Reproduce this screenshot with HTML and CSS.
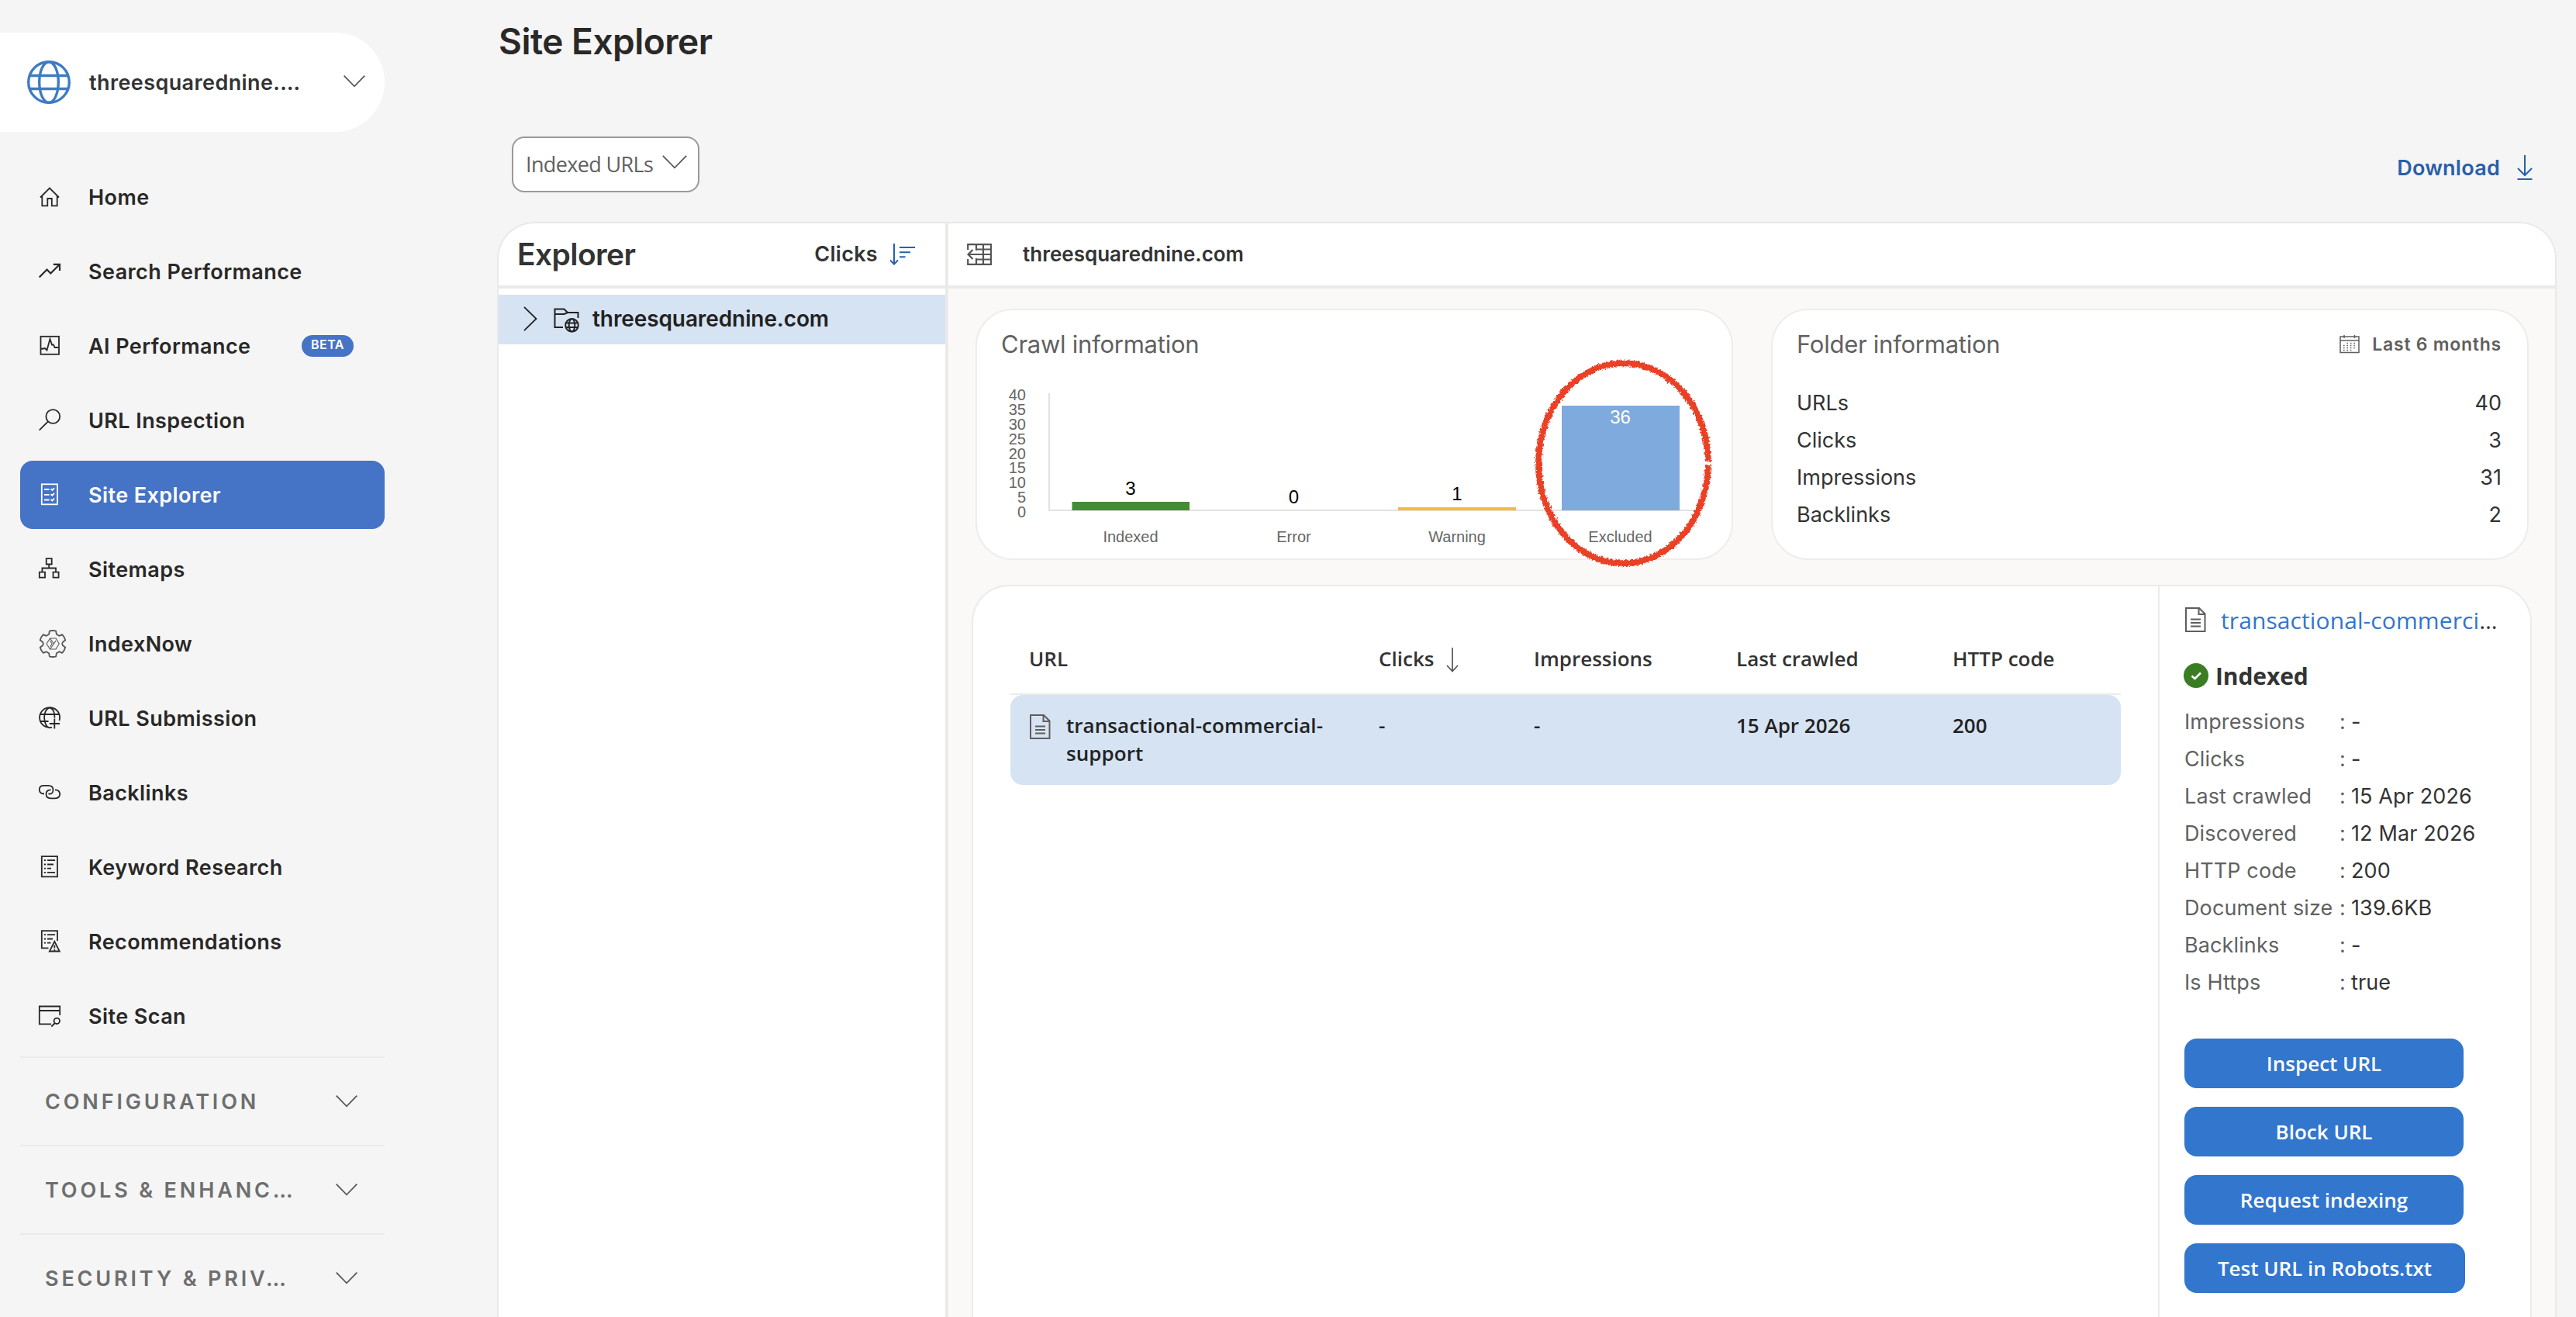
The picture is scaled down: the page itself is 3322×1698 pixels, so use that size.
FILE: index.html
```html
<!DOCTYPE html>
<html lang="en">
<head>
    <meta charset="UTF-8">
    <meta name="viewport" content="width=device-width, initial-scale=1.0">
    <title>Site Explorer</title>
    <link rel="stylesheet" href="styles.css">
</head>
<body>
    <aside class="sidebar">
        <div class="site-select">
            <svg class="site-globe" width="56" height="56" viewBox="0 0 56 56">
                <circle cx="28" cy="28" r="26.3"/>
                <ellipse cx="28" cy="28" rx="12.3" ry="26.3"/>
                <path d="M3.5 19.500H52.500M3.500 36.500H52.500"/>
            </svg>
            <span class="site-name">threesquarednine.…</span>
            <svg class="chevron" width="28" height="16" viewBox="0 0 28 16"><path d="M.7 .7 14 14.300 27.300 .7"/></svg>
        </div>

        <nav class="nav">
            <a class="nav-item">
                <svg class="nav-icon" viewBox="0 0 28 28"><path d="M2 14.500 14 2.500 26 14.500M4.300 12.500V25.300H11.300V16H16.800V25.300H23.700V12.500"/></svg>
                <span>Home</span>
            </a>
            <a class="nav-item">
                <svg class="nav-icon bold" viewBox="0 0 28 28"><path d="M.7 21.500 10.500 11.500 15.300 16.500 27 4.800M18.800 4.800H27V13"/></svg>
                <span>Search Performance</span>
            </a>
            <a class="nav-item">
                <svg class="nav-icon" viewBox="0 0 28 28"><rect x="2.500" y="1.800" width="23.500" height="23"/><path d="M3 18 5.500 17.500 8 17 10.500 19.500 14.500 5 17 12.500 19 12.500 20.500 16H25.500"/></svg>
                <span>AI Performance</span>
                <span class="beta">BETA</span>
            </a>
            <a class="nav-item">
                <svg class="nav-icon" viewBox="0 0 28 28"><circle cx="18.300" cy="9" r="8.900"/><path d="M12 15.300.7 26.700"/></svg>
                <span>URL Inspection</span>
            </a>
            <a class="nav-item active">
                <svg class="nav-icon" viewBox="0 0 28 28"><rect x="3.800" y=".3" width="20.200" height="26"/><path d="M7 7H13.500M7 13.800H13.500M7 20.500H13.500M15.500 6.500 17.500 8 20 5M15.500 13.300 17.500 14.800 20 11.800M15.500 20 17.500 21.500 20 18.500"/></svg>
                <span>Site Explorer</span>
            </a>
            <a class="nav-item">
                <svg class="nav-icon" viewBox="0 0 28 28"><path d="M9.700 .2H16.700V7.500H9.700ZM.8 17.700H8V24.700H.8ZM18.500 17.700H25.600V24.700H18.500ZM13.200 7.500V12.500M4.400 17.700V12.500H22V17.700"/></svg>
                <span>Sitemaps</span>
            </a>
            <a class="nav-item">
                <svg class="nav-icon gear" viewBox="-18 -18 36 36">
                    <path d="M-4.900-12.200-4.100-16.500Q0-17.500 4.100-16.500L4.900-12.200 8.300-10.200 12.200-11.800Q15-9 16.300-4.700L12.800-2Q11.500 0 12.800 2L16.300 4.700Q15 9 12.200 11.800L8.300 10.200 4.900 12.200 4.100 16.500Q0 17.500-4.100 16.500L-4.900 12.200-8.300 10.200-12.200 11.800Q-15 9-16.300 4.700L-12.800 2Q-11.500 0-12.800-2L-16.300-4.700Q-15-9-12.200-11.800L-8.300-10.200Z"/>
                    <path class="thin" d="M-8 0-3.500-7H4L8.300 0 4 7H-3.500ZM-3.500-7 1.500 0-3.500 7M-3.500-4-.8 0-3.500 4M1.500 0 4-4"/>
                </svg>
                <span>IndexNow</span>
            </a>
            <a class="nav-item">
                <svg class="nav-icon" viewBox="0 0 28 28"><path d="M17 25.800A13 13 0 1 1 26.500 17M9 22C6.500 17 6.500 9 9 4.500Q11.500.5 14 .5T19 4.500Q20.500 8 20.500 13.500M9 22Q11.500 26.300 14 26.300M1.800 9H26.200M1.800 18H12.500M20.300 14.500V27.500M13.800 21H27"/></svg>
                <span>URL Submission</span>
            </a>
            <a class="nav-item">
                <svg class="nav-icon" viewBox="0 0 28 28"><path d="M7 15.500Q.8 15.500.8 10T7 4.800H12.500Q18.500 4.800 18.500 10.500T12.500 15.500M21 10.300Q27.200 10.500 27.200 15.800T21 21.300H15.500Q9.500 21.300 9.500 15.800T15.500 10.300"/></svg>
                <span>Backlinks</span>
            </a>
            <a class="nav-item">
                <svg class="nav-icon" viewBox="0 0 28 28"><path d="M3.800 .2H24V26.300H3.800ZM6.800 5.200H9M11 5.200H21M6.800 10.500H9M11 10.500H19M6.800 15.700H9M11 15.700H16M6.800 20.800H9M11 20.800H21"/></svg>
                <span>Keyword Research</span>
            </a>
            <a class="nav-item">
                <svg class="nav-icon" viewBox="0 0 28 28"><path d="M12.500 22.300H3.800V.2H24V13M6.800 5.200H9M11 5.200H21M6.800 10.500H9M11 10.500H18M6.800 15.700H9M11 15.700H15.500M20.300 13.800 13.800 26.500H26.800ZM20.300 18.500V22.500M20.300 24V25.500"/></svg>
                <span>Recommendations</span>
            </a>
            <a class="nav-item">
                <svg class="nav-icon" viewBox="0 0 28 28"><path d="M16 24.300H.8V1.500H27.200V13M.8 7H27.200M20.800 23 16.300 27.500"/><circle cx="23.300" cy="20.300" r="3.700"/></svg>
                <span>Site Scan</span>
            </a>
        </nav>

        <div class="nav-groups">
            <div class="nav-group">
                <span>CONFIGURATION</span>
                <svg class="chevron" width="28" height="16" viewBox="0 0 28 16"><path d="M.7 .7 14 14.300 27.300 .7"/></svg>
            </div>
            <div class="nav-group">
                <span>TOOLS &amp; ENHANC…</span>
                <svg class="chevron" width="28" height="16" viewBox="0 0 28 16"><path d="M.7 .7 14 14.300 27.300 .7"/></svg>
            </div>
            <div class="nav-group">
                <span>SECURITY &amp; PRIV…</span>
                <svg class="chevron" width="28" height="16" viewBox="0 0 28 16"><path d="M.7 .7 14 14.300 27.300 .7"/></svg>
            </div>
        </div>
    </aside>

    <main class="main">
        <h1>Site Explorer</h1>

        <div class="toolbar">
            <button class="filter">
                <span>Indexed URLs</span>
                <svg class="chevron" width="32" height="18" viewBox="0 0 32 18"><path d="M.8 .8 16 16.300 31.200 .8"/></svg>
            </button>
            <a class="download">
                <span>Download</span>
                <svg width="20" height="34" viewBox="0 0 20 34"><path d="M10 0V26M1 17 10 26 19 17M.5 31H19.500"/></svg>
            </a>
        </div>

        <div class="panel">
            <section class="explorer">
                <div class="pane-head explorer-head">
                    <h2>Explorer</h2>
                    <span class="sort-label">Clicks</span>
                    <svg class="sort-icon" width="34" height="28" viewBox="0 0 34 28"><path d="M6 0V26M1 21.500 6 26.500 11 21.500M13 5H33M13 11.200H27M13 17.200H20.500"/></svg>
                </div>
                <div class="tree">
                    <div class="tree-row">
                        <svg class="tree-chevron" width="18" height="32" viewBox="0 0 18 32"><path d="M1 .8 16.500 16 1 31.200"/></svg>
                        <svg class="tree-folder" width="34" height="32" viewBox="0 0 34 32">
                            <path d="M12 25H1.500V1.500H13.500L18 6H31.500V13M1.500 8H13.500L18 6"/>
                            <circle cx="23.500" cy="22.300" r="8.300"/>
                            <ellipse cx="23.500" cy="22.300" rx="3.800" ry="8.300"/>
                            <path d="M15.500 19.500H31.500M15.500 25H31.500"/>
                        </svg>
                        <span>threesquarednine.com</span>
                    </div>
                </div>
            </section>

            <section class="content">
                <div class="pane-head content-head">
                    <svg width="32" height="28" viewBox="0 0 32 28"><path d="M1.200 8V1.200H31V26.800H1.200V20M12 1V9M12 19V27M21 1V27M12 7.500H31M12 20.500H31M1 14H31M7.500 8 1.500 14 7.500 20"/></svg>
                    <span>threesquarednine.com</span>
                </div>

                <div class="content-body">
                    <div class="cards">
                        <div class="card crawl-card">
                            <h3>Crawl information</h3>
                            <svg class="chart" width="973" height="256" viewBox="0 0 973 256">
                                <path class="axis" d="M93 43V194.500M92 194H928"/>
                                <g class="ticks">
                                    <text x="63" y="52">40</text>
                                    <text x="63" y="71">35</text>
                                    <text x="63" y="90">30</text>
                                    <text x="63" y="109">25</text>
                                    <text x="63" y="128">20</text>
                                    <text x="63" y="146">15</text>
                                    <text x="63" y="165">10</text>
                                    <text x="63" y="184">5</text>
                                    <text x="63" y="203">0</text>
                                </g>
                                <rect class="bar-indexed" x="122.500" y="183" width="151.500" height="11"/>
                                <rect class="bar-warning" x="543" y="190" width="152" height="4"/>
                                <rect class="bar-excluded" x="754" y="59" width="152" height="135"/>
                                <g class="values">
                                    <text x="198" y="174">3</text>
                                    <text x="408.500" y="185">0</text>
                                    <text x="619" y="181">1</text>
                                    <text class="inside" x="829.500" y="82">36</text>
                                </g>
                                <g class="labels">
                                    <text x="198" y="235">Indexed</text>
                                    <text x="408.500" y="235">Error</text>
                                    <text x="619" y="235">Warning</text>
                                    <text x="829.500" y="235">Excluded</text>
                                </g>
                            </svg>
                            <!-- crayon ring over the Excluded bar -->
                            <svg class="ring" width="247" height="288" viewBox="0 0 247 288">
                                <filter id="crayon" x="-5%" y="-5%" width="110%" height="110%">
                                    <feTurbulence type="fractalNoise" baseFrequency="0.4" numOctaves="3" seed="4"/>
                                    <feDisplacementMap in="SourceGraphic" scale="6" xChannelSelector="R" yChannelSelector="G"/>
                                </filter>
                                <path d="M233 142.500A109.500 129 0 1 0 233 146" filter="url(#crayon)"/>
                            </svg>
                        </div>

                        <div class="card folder-card">
                            <div class="folder-head">
                                <h3>Folder information</h3>
                                <svg width="26" height="24" viewBox="0 0 26 24"><path d="M1 2H25V22.500H1ZM1 7H25M6 0V4M19.500 0V4"/><path class="dots" d="M9.500 10.500H22M5 13.500H22M5 16.500H22M5 19.500H18"/></svg>
                                <span class="period">Last 6 months</span>
                            </div>
                            <div class="stat"><span>URLs</span><span>40</span></div>
                            <div class="stat"><span>Clicks</span><span>3</span></div>
                            <div class="stat"><span>Impressions</span><span>31</span></div>
                            <div class="stat"><span>Backlinks</span><span>2</span></div>
                        </div>
                    </div>

                    <div class="results">
                        <div class="table">
                            <div class="table-row table-head">
                                <span>URL</span>
                                <span class="sorted">Clicks
                                    <svg width="16" height="32" viewBox="0 0 16 32"><path d="M8 0V30M1 23 8 30.500 15 23"/></svg>
                                </span>
                                <span>Impressions</span>
                                <span>Last crawled</span>
                                <span>HTTP code</span>
                            </div>
                            <div class="table-row table-line">
                                <div class="url-cell">
                                    <svg class="file" width="28" height="34" viewBox="0 0 28 34"><path d="M2 2H19L26.500 9.500V32H2ZM18.500 2V10H26.500M8 16.500H21M8 21H21M8 25.500H21"/></svg>
                                    <span>transactional-commercial-<br>support</span>
                                </div>
                                <span>-</span>
                                <span>-</span>
                                <span>15 Apr 2026</span>
                                <span>200</span>
                            </div>
                        </div>

                        <div class="details">
                            <div class="details-link">
                                <svg class="file" width="28" height="34" viewBox="0 0 28 34"><path d="M2 2H19L26.500 9.500V32H2ZM18.500 2V10H26.500M8 16.500H21M8 21H21M8 25.500H21"/></svg>
                                <span><a>transactional-commerci</a>…</span>
                            </div>
                            <div class="status">
                                <svg width="32" height="32" viewBox="0 0 32 32"><circle cx="16" cy="16" r="16"/><path d="M10.500 16.500 14.500 20 22 12.500"/></svg>
                                <span>Indexed</span>
                            </div>
                            <dl>
                                <dt>Impressions</dt><dd>-</dd>
                                <dt>Clicks</dt><dd>-</dd>
                                <dt>Last crawled</dt><dd>15 Apr 2026</dd>
                                <dt>Discovered</dt><dd>12 Mar 2026</dd>
                                <dt>HTTP code</dt><dd>200</dd>
                                <dt>Document size</dt><dd>139.6KB</dd>
                                <dt>Backlinks</dt><dd>-</dd>
                                <dt>Is Https</dt><dd>true</dd>
                            </dl>
                            <div class="actions">
                                <button>Inspect URL</button>
                                <button>Block URL</button>
                                <button>Request indexing</button>
                                <button class="wide">Test URL in Robots.txt</button>
                            </div>
                        </div>
                    </div>
                </div>
            </section>
        </div>
    </main>
</body>
</html>
```

FILE: styles.css
```css
* {
    box-sizing: border-box;
}

body {
    margin: 0;
    height: 1698px;
    overflow: hidden;
    display: flex;
    background-color: #f5f5f5;
    color: #292827;
    font-family: "Inter", sans-serif;
    font-size: 27px;
}

h1, h2, h3, dl, dd {
    margin: 0;
}

svg {
    flex-shrink: 0;
    fill: none;
    stroke: currentColor;
}

button {
    font-family: "Open Sans", sans-serif;
    padding: 0;
    border: none;
}

.chevron {
    stroke: #555;
    stroke-width: 1.7;
}

/* Sidebar */
.sidebar {
    width: 496px;
    flex-shrink: 0;
    padding-top: 42px;
}

.site-select {
    display: flex;
    align-items: center;
    height: 128px;
    padding: 0 25px 0 35px;
    border-radius: 0 64px 64px 0;
    background-color: #fff;
    color: #333;
    font-weight: 600;
    letter-spacing: 0.4px;
}

.site-select .chevron {
    margin-bottom: 2px;
}

.site-globe {
    stroke: #3f7bc4;
    stroke-width: 3.4;
}

.site-name {
    flex-grow: 1;
    margin-left: 24px;
}

.nav {
    display: flex;
    flex-direction: column;
    gap: 8px;
    padding: 40px 0 8px 26px;
}

.nav-item {
    display: flex;
    align-items: center;
    height: 88px;
    padding-left: 24px;
    border-radius: 16px;
    font-weight: 600;
    letter-spacing: 0.42px;
}

.nav-item.active {
    background-color: #4573c6;
    color: #fff;
}

.nav-icon {
    width: 28px;
    height: 28px;
    margin-right: 36px;
    stroke-width: 1.8;
    overflow: visible;
}

.nav-icon.bold {
    stroke-width: 2.2;
}

.gear {
    width: 36px;
    height: 36px;
    margin-right: 28px;
    color: #555;
    stroke-linejoin: round;
}

.gear .thin {
    stroke-width: 1.1;
}

.beta {
    height: 28px;
    width: 67px;
    margin-left: auto;
    margin-right: 40px;
    border-radius: 14px;
    background-color: #4573c6;
    color: #fff;
    font-size: 16px;
    letter-spacing: 0.5px;
    line-height: 25px;
    text-align: center;
}

.nav-groups {
    padding-left: 26px;
}

.nav-group {
    display: flex;
    align-items: center;
    justify-content: space-between;
    height: 114px;
    padding: 0 35px 0 32px;
    border-top: 2px solid #ebebeb;
    color: #6e6e6e;
    font-weight: 600;
    letter-spacing: 3.85px;
}

/* Main area */
.main {
    flex-grow: 1;
    padding: 23px 25px 0 145px;
    display: flex;
    flex-direction: column;
}

h1 {
    margin-left: 2px;
    font-size: 46px;
    font-weight: 600;
    letter-spacing: -0.5px;
    line-height: 60px;
}

.toolbar {
    display: flex;
    justify-content: space-between;
    margin: 93px 31px 38px 19px;
}

.filter {
    display: flex;
    align-items: center;
    width: 242px;
    height: 72px;
    padding: 0 14px 0 16px;
    justify-content: space-between;
    border: 2px solid #999;
    border-radius: 16px;
    background-color: #fff;
    color: #616161;
    font-size: 27px;
    letter-spacing: -0.65px;
}

.filter span {
    margin-bottom: 2px;
}

.filter .chevron {
    margin-bottom: 6px;
}

.download {
    display: flex;
    align-items: center;
    gap: 22px;
    padding-top: 9px;
    color: #285fa8;
    font-weight: 600;
    letter-spacing: 0.25px;
}

.download svg {
    stroke-width: 2;
}

.panel {
    flex-grow: 1;
    display: flex;
    border: 2px solid #e9e9e9;
    border-bottom: none;
    border-radius: 48px 48px 0 0;
    overflow: hidden;
    background-color: #fff;
}

.pane-head {
    display: flex;
    align-items: center;
    height: 84px;
    padding-bottom: 1px;
    border-bottom: 4px solid #ebeae8;
    color: #333;
    font-weight: 600;
}

/* Explorer tree */
.explorer {
    width: 576px;
    flex-shrink: 0;
}

.explorer-head {
    padding: 0 38px 1px 24px;
}

h2 {
    flex-grow: 1;
    font-size: 39px;
    font-weight: 600;
    letter-spacing: -0.6px;
}

.sort-label {
    letter-spacing: 0.3px;
}

.sort-icon {
    margin-left: 15px;
    stroke: #2860ae;
    stroke-width: 2;
}

.tree {
    padding-top: 8px;
}

.tree-row {
    display: flex;
    align-items: center;
    height: 64px;
    padding: 0 0 2px 32px;
    background-color: #d6e3f3;
    color: #222;
    font-size: 28px;
    font-weight: 600;
    letter-spacing: -0.1px;
}

.tree-chevron {
    stroke-width: 1.8;
}

.tree-folder {
    margin: 4px 16px 0 21px;
    stroke-width: 2;
}

/* Content */
.content {
    flex-grow: 1;
    display: flex;
    flex-direction: column;
    border-left: 4px solid #ebeae8;
    background-color: #faf9f7;
}

.content-head {
    padding-left: 24px;
    gap: 40px;
    background-color: #fff;
    font-size: 26px;
}

.content-head svg {
    stroke: #555;
    stroke-width: 2.2;
}

.content-body {
    flex-grow: 1;
    display: flex;
    flex-direction: column;
    gap: 32px;
    padding: 26px 30px 0;
}

.cards {
    display: grid;
    grid-template-columns: 1fr 1fr;
    gap: 49px;
    padding: 0 4px 0 5px;
}

.card {
    position: relative;
    height: 324px;
    border: 2px solid #eeedeb;
    border-radius: 48px;
    background-color: #fff;
}

h3 {
    color: #616161;
    font-size: 31px;
    font-weight: 400;
    letter-spacing: -0.25px;
    line-height: 40px;
}

.crawl-card {
    padding-top: 24px;
}

.crawl-card h3 {
    padding-left: 31px;
}

.chart {
    display: block;
    font-family: "Liberation Sans", sans-serif;
}

.chart text {
    stroke: none;
    text-anchor: middle;
}

.chart rect {
    stroke: none;
}

.axis {
    stroke: #e2e2e2;
    stroke-width: 2;
}

.chart .ticks text {
    font-size: 20px;
    fill: #666;
    text-anchor: end;
}

.chart .labels text {
    font-size: 20px;
    fill: #666;
}

.values text {
    font-size: 24px;
    fill: #000;
}

.values .inside {
    fill: #fff;
}

.bar-indexed {
    fill: #468b35;
}

.bar-warning {
    fill: #f5b942;
}

.bar-excluded {
    fill: #7faadd;
}

.ring {
    position: absolute;
    left: 710px;
    top: 53px;
    stroke: #ea4025;
    stroke-width: 8;
}

.folder-card {
    padding: 24px 33px 0 31px;
}

.folder-head {
    display: flex;
    align-items: center;
    margin-bottom: 32px;
    color: #605e5c;
}

.folder-head h3 {
    flex-grow: 1;
}

.folder-head svg {
    stroke-width: 1.5;
}

.folder-head .dots {
    stroke-width: 1.4;
    stroke-dasharray: 1.6 2.8;
}

.period {
    margin-left: 16px;
    font-size: 23px;
    font-weight: 600;
    letter-spacing: 0.75px;
}

.stat {
    display: flex;
    justify-content: space-between;
    line-height: 48px;
    color: #333;
}

/* Results table */
.results {
    flex-grow: 1;
    display: flex;
    border: 2px solid #ebebea;
    border-bottom: none;
    border-radius: 48px 48px 0 0;
    background-color: #fff;
}

.table {
    flex-grow: 1;
    padding: 54px 48px 0;
    font-family: "Open Sans", sans-serif;
    font-size: 26px;
    font-weight: 600;
    line-height: 36px;
}

.table-row {
    display: grid;
    grid-template-columns: 451px 200px 261px 279px 1fr;
    padding-left: 24px;
}

.table-head {
    height: 86px;
    padding-top: 21px;
    border-bottom: 2px solid #ebebea;
    color: #333;
}

.sorted {
    display: flex;
    align-items: center;
    gap: 16px;
    height: 36px;
}

.sorted svg {
    margin-top: 3px;
    stroke: #555;
    stroke-width: 1.7;
}

.table-line {
    height: 116px;
    padding-top: 21px;
    border-radius: 16px;
    background-color: #d6e3f3;
    color: #222;
}

.url-cell {
    display: flex;
    gap: 20px;
    letter-spacing: 0.05px;
}

.file {
    margin-top: 3px;
    stroke: #605e5c;
    stroke-width: 2;
}

/* Details */
.details {
    width: 480px;
    flex-shrink: 0;
    padding: 21px 0 0 32px;
    border-left: 2px solid #ebebea;
    color: #333;
}

.details-link {
    display: flex;
    align-items: center;
    gap: 19px;
    height: 44px;
    font-family: "Open Sans", sans-serif;
    font-size: 30px;
    letter-spacing: 0.1px;
    white-space: nowrap;
}

.details-link .file {
    margin-top: 0;
}

.details-link a {
    color: #3276cd;
}

.status {
    display: flex;
    align-items: center;
    gap: 9px;
    height: 44px;
    margin: 28px 0 14px -1px;
    font-family: "Open Sans", sans-serif;
    font-size: 30px;
    font-weight: 700;
    letter-spacing: -0.1px;
}

.status svg {
    stroke: none;
}

.status circle {
    fill: #3b7d23;
}

.status path {
    stroke: #fff;
    stroke-width: 2.6;
}

dl {
    display: grid;
    grid-template-columns: 200px 1fr;
    letter-spacing: 0.12px;
    line-height: 48px;
}

dt {
    color: #616161;
    white-space: nowrap;
}

dd::before {
    content: ":";
    display: inline-block;
    width: 15px;
    color: #616161;
}

.actions {
    display: flex;
    flex-direction: column;
    gap: 24px;
    margin-top: 48px;
}

.actions button {
    width: 360px;
    height: 64px;
    padding-bottom: 1px;
    border-radius: 16px;
    background-color: #3276cd;
    color: #fff;
    font-size: 26px;
    font-weight: 600;
}

.actions .wide {
    width: 362px;
}
```
